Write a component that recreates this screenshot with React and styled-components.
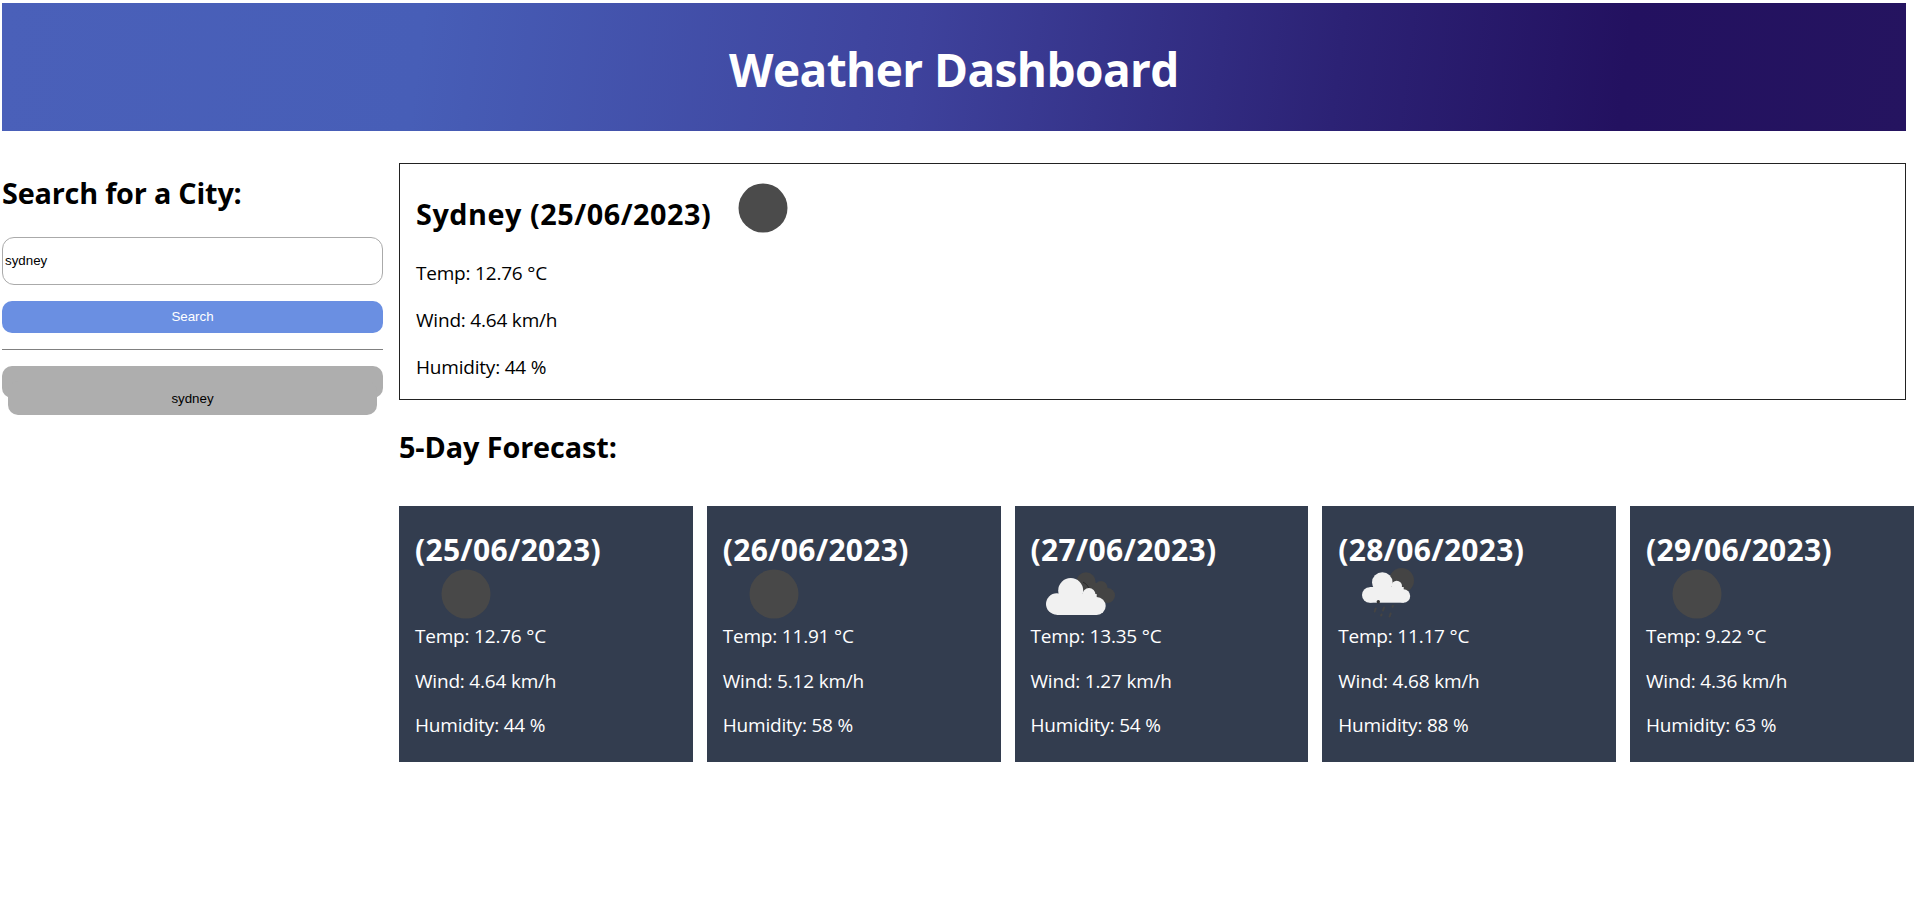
import React from 'react'
import styled, { createGlobalStyle } from 'styled-components'

const GlobalStyle = createGlobalStyle`
  html, body {
    margin: 0;
    overflow: hidden;
    background: #fff;
  }
  body {
    font-family: 'Open Sans', 'Noto Sans', sans-serif;
    color: #000;
  }
`

const Page = styled.div`
  padding: 3px 8px 0 2px;
  width: 1914px;
  box-sizing: border-box;
`

const Header = styled.header`
  height: 128px;
  box-sizing: border-box;
  padding-top: 4px;
  display: flex;
  align-items: center;
  justify-content: center;
  background: linear-gradient(97deg, #4a60b9 0%, #475eb7 22%, #3e429c 48%, #2c2275 70%, #231160 85%, #251460 100%);
  color: #fff;
`

const Title = styled.h1`
  margin: 0;
  font-size: 46px;
  font-weight: 700;
  letter-spacing: -0.6px;
`

const Columns = styled.div`
  display: grid;
  grid-template-columns: 381px 1fr;
  column-gap: 16px;
  margin-top: 32px;
`

const Sidebar = styled.aside`
  display: flex;
  flex-direction: column;
`

const SideTitle = styled.h2`
  margin: 11px 0 2px;
  font-size: 28.8px;
  line-height: 38px;
  font-weight: 700;
  letter-spacing: -0.2px;
`

const CityInput = styled.input`
  margin-top: 23px;
  height: 48px;
  box-sizing: border-box;
  border: 1px solid #aaa;
  border-radius: 12px;
  padding: 0 2px 1px;
  font: 13.33px 'Liberation Sans', Arial, sans-serif;
  color: #000;
  outline: none;
`

const SearchButton = styled.button`
  margin-top: 16px;
  height: 32px;
  border: none;
  border-radius: 10px;
  padding: 0 0 2px;
  background: #6a8fe2;
  color: #fff;
  font: 13.33px 'Liberation Sans', Arial, sans-serif;
`

const Rule = styled.hr`
  width: 100%;
  margin: 16px 0;
  border: none;
  border-top: 1px solid #808080;
`

const HistoryItem = styled.div`
  height: 17px;
  padding-top: 15px;
  background: #aeaeae;
  border-radius: 10px;
`

const HistoryLabel = styled.div`
  margin: 0 6px;
  height: 34px;
  border-radius: 10px;
  background: #aeaeae;
  display: flex;
  align-items: center;
  justify-content: center;
  font: 13.33px 'Liberation Sans', Arial, sans-serif;
  color: #000;
`

const Main = styled.main`
  min-width: 0;
`

const Current = styled.section`
  height: 237px;
  box-sizing: border-box;
  border: 1px solid #222;
  padding: 19px 16px 0;
`

const CurrentHead = styled.div`
  display: flex;
  align-items: flex-start;
  height: 67px;
`

const CurrentTitle = styled.h2`
  margin: 12px 0 0;
  font-size: 28.8px;
  line-height: 38px;
  font-weight: 700;
  letter-spacing: 0.53px;
`

const IconSlot = styled.svg`
  display: block;
  flex: none;
  width: 50px;
  height: 50px;
  overflow: visible;
  margin-left: ${p => p.$left || 0}px;
`

// the icon is taller than the room it leaves above the first stat line
const CardIcon = styled.div`
  height: 45px;
`

const Stat = styled.p`
  margin: 0;
  font-size: 19px;
  line-height: ${p => (p.$compact ? 44.7 : 47)}px;
  letter-spacing: -0.2px;
  white-space: nowrap;
`

const ForecastTitle = styled.h3`
  margin: 28px 0 0;
  font-size: 28.8px;
  line-height: 38px;
  font-weight: 700;
  letter-spacing: -0.1px;
`

const Cards = styled.div`
  display: flex;
  gap: 14px;
  margin-top: 40px;
`

const Card = styled.article`
  flex: 0 0 293.75px;
  height: 256px;
  box-sizing: border-box;
  padding: 23px 16px 0;
  background: #333d4f;
  color: #fff;
`

const CardDate = styled.h3`
  margin: 1px 0 -1px;
  font-size: 30px;
  line-height: 40px;
  font-weight: 700;
  letter-spacing: 0.3px;
`

function WeatherIcon({ kind, left }) {
  if (kind === 'clouds') {
    return (
      <IconSlot $left={left} viewBox="0 0 50 50">
        <g fill="#444">
          <circle cx="29" cy="13" r="9.7" />
          <circle cx="44" cy="18.500" r="6.500" />
          <circle cx="50.500" cy="26.500" r="7.500" />
          <rect x="28" y="14" width="20" height="16" />
        </g>
        <path d="M26 13a12.500 12.500 0 0 1 6 6M34 21a7 7 0 0 1 4 6" fill="none" stroke="#2a2a2a" strokeWidth="1" />
        <g fill="#f1f1f1">
          <circle cx="-0.300" cy="35" r="10.700" />
          <circle cx="13.700" cy="21.500" r="12.500" />
          <circle cx="32" cy="25.500" r="6.500" />
          <circle cx="39.700" cy="37" r="9" />
          <rect x="-0.300" y="25" width="40" height="21" />
        </g>
      </IconSlot>
    )
  }
  if (kind === 'rain') {
    return (
      <IconSlot $left={left} viewBox="0 0 50 50">
        <g transform="translate(1 0)">
          <circle cx="36.500" cy="11.500" r="12.500" fill="#444" />
          <g fill="#f1f1f1">
            <circle cx="4.700" cy="26" r="7.700" />
            <circle cx="17.300" cy="13.600" r="10.300" />
            <circle cx="31.700" cy="17" r="5.300" />
            <circle cx="38.500" cy="27" r="6.700" />
            <rect x="4.700" y="18" width="34" height="15.700" />
          </g>
          <circle cx="13.300" cy="32.700" r="1.700" fill="#333" />
          <g stroke="#444" strokeWidth="2" strokeLinecap="round">
            <path d="M10.700 39.500l-1 3" />
            <path d="M19 38.500l-1 3" />
            <path d="M28 36.800l-.5 1" />
            <path d="M16.600 45.500l-.5 1" />
            <path d="M25.600 44.500l-1 3" />
          </g>
        </g>
      </IconSlot>
    )
  }
  return (
    <IconSlot $left={left} viewBox="0 0 50 50">
      <circle cx="25" cy="25" r="24.500" fill={kind === 'moonDark' ? '#4b4b4b' : '#484848'} />
    </IconSlot>
  )
}

const forecast = [
  { date: '(25/06/2023)', icon: 'moon', temp: '12.76', wind: '4.64', humidity: '44' },
  { date: '(26/06/2023)', icon: 'moon', temp: '11.91', wind: '5.12', humidity: '58' },
  { date: '(27/06/2023)', icon: 'clouds', temp: '13.35', wind: '1.27', humidity: '54' },
  { date: '(28/06/2023)', icon: 'rain', temp: '11.17', wind: '4.68', humidity: '88' },
  { date: '(29/06/2023)', icon: 'moon', temp: '9.22', wind: '4.36', humidity: '63' },
]

export default function App() {
  return (
    <>
      <GlobalStyle />
      <Page>
        <Header>
          <Title>Weather Dashboard</Title>
        </Header>
        <Columns>
          <Sidebar>
            <SideTitle>Search for a City:</SideTitle>
            <CityInput defaultValue="sydney" />
            <SearchButton>Search</SearchButton>
            <Rule />
            <HistoryItem>
              <HistoryLabel>sydney</HistoryLabel>
            </HistoryItem>
          </Sidebar>
          <Main>
            <Current>
              <CurrentHead>
                <CurrentTitle>Sydney (25/06/2023)</CurrentTitle>
                <WeatherIcon kind="moonDark" left={27} />
              </CurrentHead>
              <Stat>Temp: 12.76 °C</Stat>
              <Stat>Wind: 4.64 km/h</Stat>
              <Stat>Humidity: 44 %</Stat>
            </Current>
            <ForecastTitle>5-Day Forecast:</ForecastTitle>
            <Cards>
              {forecast.map(day => (
                <Card key={day.date}>
                  <CardDate>{day.date}</CardDate>
                  <CardIcon>
                    <WeatherIcon kind={day.icon} left={26} />
                  </CardIcon>
                  <Stat $compact>Temp: {day.temp} °C</Stat>
                  <Stat $compact>Wind: {day.wind} km/h</Stat>
                  <Stat $compact>Humidity: {day.humidity} %</Stat>
                </Card>
              ))}
            </Cards>
          </Main>
        </Columns>
      </Page>
    </>
  )
}
